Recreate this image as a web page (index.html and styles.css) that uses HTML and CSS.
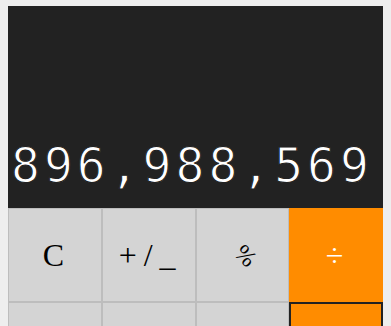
FILE: index.html
```html
<!DOCTYPE html>
<html>
<head>
<meta charset="utf-8">
<link rel="stylesheet" href="styles.css">
</head>
<body>
<div class="calc">
  <div class="display"><span class="value">896,988,569</span></div>
  <div class="keys">
    <button class="key">C</button>
    <button class="key">+/_</button>
    <button class="key"><span class="pct">%</span></button>
    <button class="key op">÷</button>
    <button class="key"></button>
    <button class="key"></button>
    <button class="key"></button>
    <button class="key op active"></button>
  </div>
</div>
</body>
</html>
```
FILE: styles.css
```css
html, body {
  background: #eeeeee;
}
body {
  margin: 6px 8px 8px;
  font-family: "Liberation Serif", serif;
}
.calc {
  width: 375px;
}
.display {
  background: #222222;
  height: 202px;
  box-sizing: border-box;
  display: flex;
  align-items: flex-end;
  padding: 0 0 19px 3px;
  overflow: hidden;
}
.value {
  font-family: "DejaVu Sans Mono", monospace;
  font-size: 48px;
  line-height: 1;
  letter-spacing: 4px;
  color: #ffffff;
  white-space: nowrap;
  -webkit-text-stroke: 1.1px #222222;
}
.keys {
  display: grid;
  grid-template-columns: repeat(4, 1fr);
  grid-auto-rows: 94px;
}
.key {
  margin: 0;
  padding: 0;
  background: #d4d4d4;
  border: 1px solid #bdbdbd;
  font-family: "Liberation Serif", serif;
  font-size: 32px;
  letter-spacing: 7px;
  text-indent: 4px;
  color: #000000;
}
.op {
  background: #ff8c00;
  border-color: #ff8c00;
  color: #ffffff;
}
.active {
  border: 2px solid #222222;
}
.pct {
  display: inline-block;
  transform: translateY(-4px) rotate(45deg);
  letter-spacing: 0;
  font-size: 24px;
}
```
